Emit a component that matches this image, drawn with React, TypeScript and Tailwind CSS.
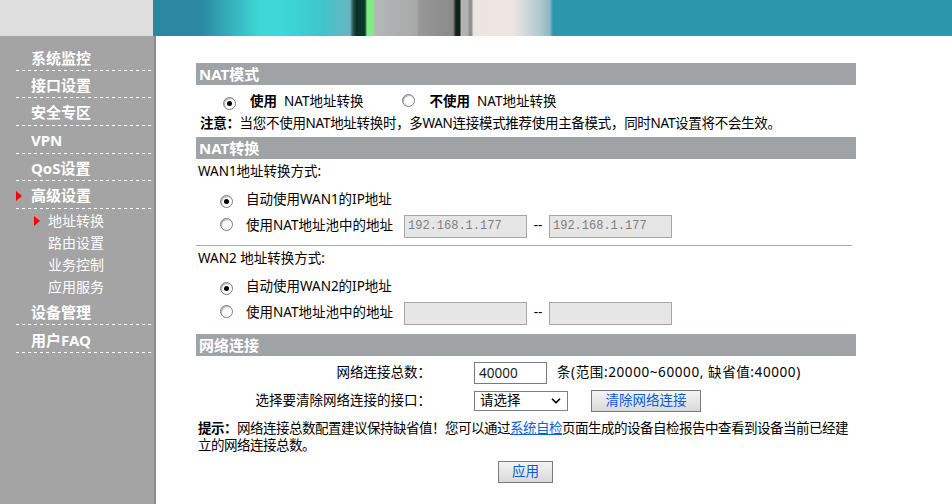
import React from "react";
import { ChevronDown } from "lucide-react";

const Radio = ({ checked }: { checked?: boolean }) => (
  <span className="inline-flex h-[13px] w-[13px] shrink-0 items-center justify-center rounded-full border border-[#7b7b7b] bg-white shadow-[inset_1px_1px_1px_rgba(0,0,0,0.3)]">
    {checked && <span className="h-[5px] w-[5px] rounded-full bg-black" />}
  </span>
);

const Dash = () => (
  <div className="ml-[16px] h-px w-[136px] bg-[repeating-linear-gradient(90deg,#ffffff_0px,#ffffff_3px,transparent_3px,transparent_6px)]" />
);

const Tri = () => (
  <svg width="6" height="10" viewBox="0 0 6 10" className="shrink-0">
    <polygon points="0,0 6,5 0,10" fill="#ff0000" />
  </svg>
);

const Bar = ({ children, className = "" }: { children: React.ReactNode; className?: string }) => (
  <div className={`flex h-[22px] items-center bg-[#a0a3a6] pl-[3px] text-[15px] font-bold leading-none text-white ${className}`}>
    {children}
  </div>
);

const IpInput = ({ value }: { value: string }) => (
  <input
    readOnly
    value={value}
    className="h-[23px] w-[123px] border border-[#a5a5a5] bg-[#e6e6e6] px-[3px] font-['Liberation_Mono',monospace] text-[12px] text-[#7f7f7f] outline-none"
  />
);

export default function App() {
  return (
    <div className="flex h-[504px] w-[952px] flex-col overflow-hidden bg-white font-['Noto_Sans','Noto_Sans_CJK_SC',sans-serif] text-black">
      <div className="flex h-[36px] shrink-0">
        <div className="w-[153px] bg-[#dedede]" />
        <div className="flex-1 bg-[linear-gradient(90deg,#2b87a0_0px,#2b88a0_47px,#3dd8d6_107px,#3dd8d8_130px,#3fc4cc_170px,#6ab4c0_197px,#2a5a58_200px,#0a3028_203px,#0c3a2c_212px,#7af07a_214px,#88e888_220px,#b4b8b8_222px,#a8a8a8_264px,#989898_266px,#8a8a8a_300px,#102018_303px,#102018_307px,#b4b4b4_308px,#b0b0b0_315px,#909090_316px,#909090_319px,#ece4e0_320px,#ece6e2_360px,#d8dcdc_370px,#b0c8cc_387px,#8cb8c4_397px,#2b97ad_400px,#2b97ad_100%)]" />
      </div>
      <div className="flex flex-1">
        <aside className="w-[156px] shrink-0 border-r-2 border-[#8c8c8c] bg-[#a4a4a4] pt-[8px] text-white">
          <div className="flex h-[26px] items-center pl-[31px] pt-[2px] text-[15px] font-bold leading-none">系统监控</div>
          <Dash />
          <div className="flex h-[26px] items-center pl-[31px] pt-[2px] text-[15px] font-bold leading-none">接口设置</div>
          <Dash />
          <div className="flex h-[27px] items-center pl-[31px] pt-[2px] text-[15px] font-bold leading-none">安全专区</div>
          <Dash />
          <div className="flex h-[27px] items-center pl-[31px] pt-[2px] text-[15px] font-bold leading-none">VPN</div>
          <Dash />
          <div className="flex h-[26px] items-center pl-[31px] pt-[2px] text-[15px] font-bold leading-none">QoS设置</div>
          <Dash />
          <div className="flex h-[27px] items-center pl-[16px] pt-[2px] text-[15px] font-bold leading-none">
            <Tri />
            <span className="ml-[9px]">高级设置</span>
          </div>
          <Dash />
          <div className="flex h-[22px] items-center pl-[34px] pt-[1px] text-[14px] leading-none">
            <Tri />
            <span className="ml-[8px]">地址转换</span>
          </div>
          <div className="flex h-[22px] items-center pl-[48px] pt-[1px] text-[14px] leading-none">路由设置</div>
          <div className="flex h-[22px] items-center pl-[48px] pt-[1px] text-[14px] leading-none">业务控制</div>
          <div className="flex h-[22px] items-center pl-[48px] pt-[1px] text-[14px] leading-none">应用服务</div>
          <div className="flex h-[27px] items-center pl-[31px] pt-[4px] text-[15px] font-bold leading-none">设备管理</div>
          <Dash />
          <div className="flex h-[27px] items-center pl-[31px] pt-[3px] text-[15px] font-bold leading-none">用户FAQ</div>
          <Dash />
        </aside>

        <main className="ml-[40px] w-[660px] pt-[27px] text-[13.5px] leading-none">
          <Bar>NAT模式</Bar>
          <div className="flex h-[28px] items-center pt-[6px]">
            <span className="ml-[27px]"><Radio checked /></span>
            <span className="ml-[14px] font-bold">使用</span>
            <span className="ml-[7px]">NAT地址转换</span>
            <span className="ml-[39px]"><Radio /></span>
            <span className="ml-[14px] font-bold">不使用</span>
            <span className="ml-[7px]">NAT地址转换</span>
          </div>
          <div className="flex h-[22px] items-center whitespace-nowrap pl-[4px] tracking-[-0.3px]">
            <span className="font-bold">注意：</span>
            <span>当您不使用NAT地址转换时，多WAN连接模式推荐使用主备模式，同时NAT设置将不会生效。</span>
          </div>

          <Bar className="mt-[2px]">NAT转换</Bar>
          <div className="flex h-[26px] items-center pl-[2px]">WAN1地址转换方式:</div>
          <div className="mt-[2px] flex h-[26px] items-center">
            <span className="ml-[24px]"><Radio checked /></span>
            <span className="ml-[13px]">自动使用WAN1的IP地址</span>
          </div>
          <div className="flex h-[26px] items-center">
            <span className="ml-[24px]"><Radio /></span>
            <span className="ml-[13px] w-[158px]">使用NAT地址池中的地址</span>
            <IpInput value="192.168.1.177" />
            <span className="w-[22px] text-center">--</span>
            <IpInput value="192.168.1.177" />
          </div>
          <div className="mt-[6px] w-[656px] border-t border-[#a9a9a9]" />
          <div className="flex h-[26px] items-center pl-[2px]">WAN2 地址转换方式:</div>
          <div className="mt-[2px] flex h-[26px] items-center">
            <span className="ml-[24px]"><Radio checked /></span>
            <span className="ml-[13px]">自动使用WAN2的IP地址</span>
          </div>
          <div className="flex h-[26px] items-center">
            <span className="ml-[24px]"><Radio /></span>
            <span className="ml-[13px] w-[158px]">使用NAT地址池中的地址</span>
            <IpInput value="" />
            <span className="w-[22px] text-center">--</span>
            <IpInput value="" />
          </div>

          <Bar className="mt-[8px]">网络连接</Bar>
          <div className="mt-[6px] flex h-[22px] items-center">
            <span className="w-[278px] pr-[43px] text-right">网络连接总数：</span>
            <input
              readOnly
              value="40000"
              className="h-[22px] w-[73px] border border-[#7a7a7a] bg-white px-[4px] text-[13.5px] text-[#1a1a1a] outline-none"
            />
            <span className="ml-[10px] tracking-[0.6px]">条(范围:20000~60000, 缺省值:40000)</span>
          </div>
          <div className="mt-[6px] flex h-[22px] items-center">
            <span className="w-[278px] pr-[43px] text-right">选择要清除网络连接的接口：</span>
            <div className="flex h-[20px] w-[94px] items-center justify-between border border-[#7f7f7f] bg-white pl-[5px] pr-[4px]">
              <span>请选择</span>
              <ChevronDown size={14} strokeWidth={3} />
            </div>
            <div className="ml-[23px] flex h-[22px] w-[110px] items-center justify-center border border-[#7a7a7a] bg-[linear-gradient(#f4f4f4,#d9d9d9)] text-[13.5px] text-[#0a5ad6]">
              清除网络连接
            </div>
          </div>
          <p className="mt-[8px] whitespace-nowrap pl-[2px] leading-[17px] tracking-[-0.5px]">
            <span className="font-bold">提示：</span>网络连接总数配置建议保持缺省值！您可以通过
            <span className="text-[#0a5fd8] underline">系统自检</span>页面生成的设备自检报告中查看到设备当前已经建
            <br />
            立的网络连接总数。
          </p>
          <div className="ml-[302px] mt-[7px] flex h-[22px] w-[55px] items-center justify-center border border-[#7a7a7a] bg-[linear-gradient(#f4f4f4,#d9d9d9)] text-[#0a5ad6]">
            应用
          </div>
        </main>
      </div>
    </div>
  );
}
